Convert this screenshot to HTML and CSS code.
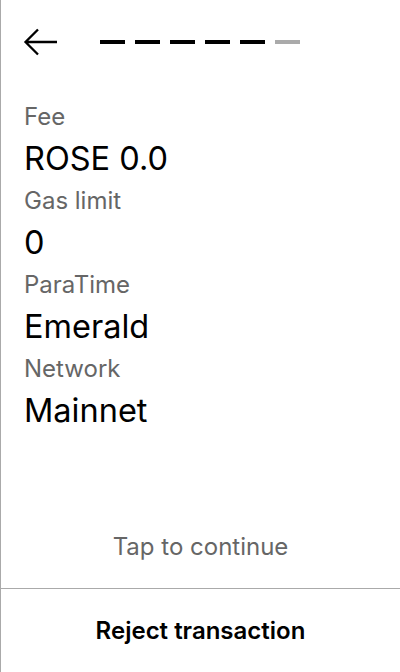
FILE: index.html
```html
<!DOCTYPE html>
<html>
<head>
<meta charset="utf-8">
<link rel="stylesheet" href="styles.css">
</head>
<body>
<div class="screen">
  <header class="header">
    <svg class="back" width="34" height="28" viewBox="0 0 34 28" fill="none" stroke="#000" stroke-width="2.3">
      <path d="M34 14H2.5M15 1.5L2.5 14L15 26.5"/>
    </svg>
    <div class="steps">
      <span class="step done"></span>
      <span class="step done"></span>
      <span class="step done"></span>
      <span class="step done"></span>
      <span class="step done"></span>
      <span class="step"></span>
    </div>
  </header>
  <main class="details">
    <div class="label">Fee</div>
    <div class="value">ROSE 0.0</div>
    <div class="label">Gas limit</div>
    <div class="value">0</div>
    <div class="label">ParaTime</div>
    <div class="value">Emerald</div>
    <div class="label">Network</div>
    <div class="value">Mainnet</div>
  </main>
  <div class="tap">Tap to continue</div>
  <div class="reject">Reject transaction</div>
</div>
</body>
</html>
```
FILE: styles.css
```css
* { box-sizing: border-box; }
html, body { margin: 0; padding: 0; background: #fff; }
body { font-family: Inter, "Noto Sans", sans-serif; }
.screen {
  width: 400px;
  height: 672px;
  border-left: 1px solid #aaa;
  display: flex;
  flex-direction: column;
}
.header {
  height: 84px;
  display: flex;
  align-items: center;
  padding-left: 22px;
  gap: 43px;
}
.back { display: block; }
.steps { display: flex; gap: 10px; }
.step { width: 25px; height: 4px; background: #aaa; display: block; }
.step.done { background: #000; }
.details {
  padding: 14.5px 0 0 23px;
  flex: 1;
}
.label {
  font-size: 24px;
  line-height: 36px;
  height: 36px;
  color: #666;
}
.value {
  font-size: 32.5px;
  line-height: 48px;
  height: 48px;
  color: #000;
}
.tap {
  text-align: center;
  font-size: 24px;
  line-height: 24px;
  color: #666;
  padding-bottom: 29px;
}
.reject {
  border-top: 1px solid #aaa;
  height: 84px;
  display: flex;
  align-items: center;
  justify-content: center;
  font-size: 24px;
  font-weight: 600;
  color: #000;
}
```
